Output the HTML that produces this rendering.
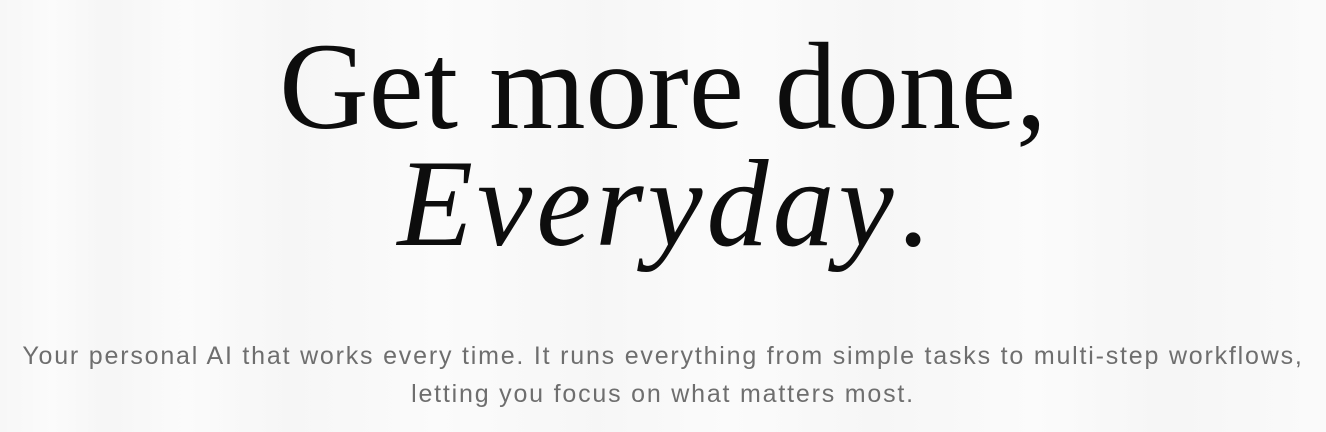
<!DOCTYPE html>
<html><head><meta charset="utf-8"><style>
html,body{margin:0;padding:0;}
body{width:1326px;height:432px;overflow:hidden;position:relative;
background:#f7f7f7;
background-image:
linear-gradient(90deg,rgba(255,255,255,0) 0,rgba(255,255,255,.5) 4%,rgba(242,242,242,.3) 8%,rgba(255,255,255,.5) 14%,rgba(244,244,244,.3) 22%,rgba(255,255,255,.5) 33%,rgba(245,245,245,.3) 45%,rgba(255,255,255,.5) 55%,rgba(244,244,244,.3) 66%,rgba(255,255,255,.5) 78%,rgba(243,243,243,.3) 88%,rgba(255,255,255,.4) 100%);
}
h1{position:absolute;left:0;right:0;top:0;margin:0;text-align:center;
font-family:"Liberation Serif",serif;font-weight:400;color:#0d0d0d;
font-size:124px;line-height:117px;letter-spacing:0;padding-top:28px;}
h1 i{font-style:italic;letter-spacing:4px;}
p{position:absolute;left:0;right:0;top:337px;margin:0;text-align:center;
font-family:"Liberation Sans",sans-serif;font-size:25px;letter-spacing:1.8px;line-height:38px;color:#6e6e6e;}
</style></head><body>
<h1>Get more done,<br><i>Everyday</i>.</h1>
<p>Your personal AI that works every time. It runs everything from simple tasks to multi-step workflows,<br>letting you focus on what matters most.</p>
</body></html>
